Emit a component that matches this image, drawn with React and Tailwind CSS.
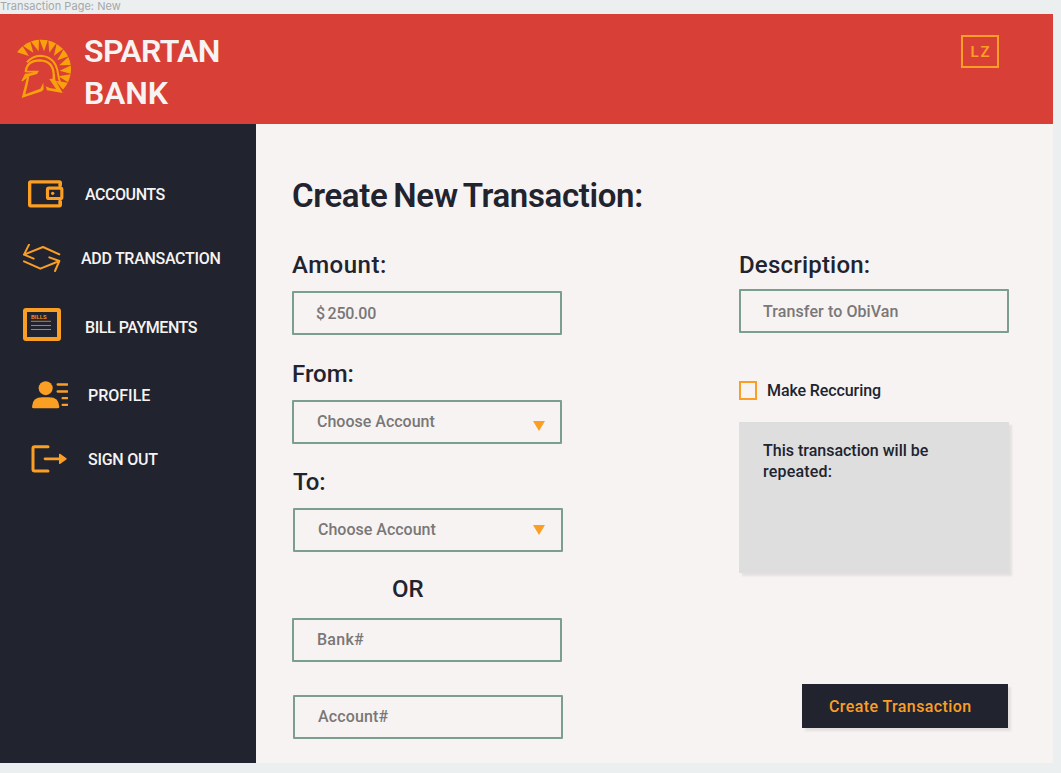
import React from 'react';

const CX = 125;
const CY = 208;
const polar = (r, deg) => {
  const a = (deg * Math.PI) / 180;
  return `${(CX + r * Math.cos(a)).toFixed(1)},${(CY + r * Math.sin(a)).toFixed(1)}`;
};

const WEDGES = Array.from({ length: 11 }, (_, i) => 215 + i * 17.2);

function Helmet() {
  return (
    <svg className="block h-[60px] w-[56px] shrink-0" viewBox="49 117 168 180" fill="none" stroke="#f9a10b">
      {WEDGES.map((a) => (
        <path
          key={a}
          fill="#f9a10b"
          stroke="none"
          d={`M${polar(89, a)}A89 89 0 0 1 ${polar(89, a + 16)}L${polar(55, a + 12)}Z`}
        />
      ))}
      <path strokeWidth="6" d="M82 187Q97 168 122 167Q163 169 173 210Q176 238 187 262" />
      <path strokeWidth="6.500" d="M78 215Q82 181 121 181Q160 183 162 222L162 238" />
      <path fill="#f9a10b" stroke="none" d="M75 212L118 212L112 222L88 229L69 244L65 243L76 221L104 218L76 217Z" />
      <path fill="#f9a10b" stroke="none" d="M82 232L89 228L84 254L77 283L122 266L131 248L132 268L127 274L66 294L77 252Z" />
      <path fill="#f9a10b" stroke="none" d="M166 220L167 240L189 279L142 271L138 259L150 264L169 267L149 237L159 236Z" />
    </svg>
  );
}

function WalletIcon() {
  return (
    <svg className="block h-[28px] w-[36px]" viewBox="54 29 108 84" fill="none" stroke="#fb9f24">
      <rect x="59" y="34.500" width="92" height="72" rx="3" strokeWidth="10" />
      <path fill="#21232f" stroke="none" d="M140 46h16v46h-16z" />
      <path strokeWidth="9" d="M150 40v14M150 84v18" />
      <rect x="112.500" y="53.500" width="43" height="31" rx="4" fill="#21232f" strokeWidth="9.500" />
      <circle cx="128" cy="69" r="5" fill="#fb9f24" stroke="none" />
    </svg>
  );
}

function ArrowsIcon() {
  return (
    <svg
      className="block h-[29px] w-[38px]"
      viewBox="38 222 114 87"
      fill="none"
      stroke="#fb9f24"
      strokeWidth="6"
      strokeLinecap="round"
      strokeLinejoin="round"
    >
      <path d="M147 253L98 231L41 254M56 224L41 254L70 266" />
      <path d="M41 274L90 296L147 273M117 262L147 273L134 303" />
    </svg>
  );
}

function BillsIcon() {
  return (
    <div className="mb-[1px] h-[33px] w-[38px] rounded-[3px] border-4 border-[#fb9f24] pl-[4px] pt-[1px]">
      <div className="h-[7px] whitespace-nowrap text-[6px] font-medium leading-[7px] tracking-[0px] text-[#fb9f24]">
        BILLS
      </div>
      <svg className="block h-[12px] w-[20px]" viewBox="0 0 20 12" stroke="#fb9f24" strokeWidth="1" opacity="0.75">
        <path d="M0 1.300H20M0 5.500H20M0 9.500H20" />
      </svg>
    </div>
  );
}

function ProfileIcon() {
  return (
    <svg className="block h-[28px] w-[37px]" viewBox="62 257 111 84" fill="#fb9f24">
      <circle cx="106" cy="278.500" r="21" />
      <path d="M65 334Q66 306 96 306H116Q146 306 147 334Q147 339 142 339H70Q65 339 65 334Z" />
      <path
        fill="none"
        stroke="#fb9f24"
        strokeWidth="7"
        strokeLinecap="round"
        d="M142 267.500H171M142 288.500H171M157 308.500H171M157 328.500H171"
      />
    </svg>
  );
}

function SignOutIcon() {
  return (
    <svg className="block h-[28px] w-[36px]" viewBox="63 450 108 84" fill="none" stroke="#fb9f24">
      <path
        strokeWidth="9"
        strokeLinecap="round"
        strokeLinejoin="round"
        d="M114 455H74Q69 455 69 460V523Q69 528 74 528H114"
      />
      <path strokeWidth="8" strokeLinecap="round" d="M105 491.500H150" />
      <path fill="#fb9f24" strokeWidth="4" strokeLinejoin="round" d="M149 478L168 491.500L149 505Z" />
    </svg>
  );
}

function NavItem({ icon, label, className, textClass }) {
  return (
    <a className={`flex h-[40px] items-center ${className}`}>
      {icon}
      <span className={`whitespace-nowrap text-[16px] font-medium leading-[20px] text-[#f7f3f2] ${textClass}`}>
        {label}
      </span>
    </a>
  );
}

function Field({ text, className = '', textClass = '', arrow }) {
  return (
    <div
      className={`flex h-[44px] w-[270px] items-center justify-between rounded-[1px] border-2 border-[#7b9e8f] pl-[23px] pr-[15px] ${className}`}
    >
      <span className={`whitespace-nowrap text-[16px] font-medium leading-[20px] text-[#797777] ${textClass}`}>{text}</span>
      {arrow && (
        <svg className={`block h-[10px] w-[12px] ${arrow}`} viewBox="0 0 12 10" fill="#fb9f24">
          <path d="M0 0H12L6 10Z" />
        </svg>
      )}
    </div>
  );
}

function Label({ children, className = '' }) {
  return (
    <div className={`h-[32px] whitespace-nowrap text-[24px] font-medium leading-[32px] text-[#21232f] ${className}`}>
      {children}
    </div>
  );
}

export default function App() {
  return (
    <div className="flex h-[773px] w-[1061px] flex-col overflow-hidden bg-[#ebeff0] font-['Roboto',sans-serif]">
      <div className="h-[14px] whitespace-nowrap font-['Inter',sans-serif] text-[11px] leading-[13px] tracking-[0.03px] text-[#a5a8a9]">
        Transaction Page: New
      </div>

      <header className="flex h-[110px] w-[1053px] shrink-0 items-start justify-between bg-[#d83f36]">
        <div className="flex pl-[16px]">
          <div className="pt-[25px]">
            <Helmet />
          </div>
          <div className="ml-[12px] mt-[16px] text-[32px] font-semibold leading-[42px] text-[#f7f3f2]">
            <div className="tracking-[-0.650px]">SPARTAN</div>
            <div className="tracking-[-0.200px]">BANK</div>
          </div>
        </div>
        <div className="mr-[54px] mt-[21px] flex h-[33px] w-[38px] items-center justify-center border-2 border-[#fb9f24] pl-[2px] pt-[2px] text-[15px] font-semibold tracking-[1.800px] text-[#fb9f24]">
          LZ
        </div>
      </header>

      <div className="flex h-[639px] w-[1053px] shrink-0">
        <nav className="w-[256px] shrink-0 bg-[#21232f] pt-[50px]">
          <NavItem icon={<WalletIcon />} label="ACCOUNTS" className="pl-[28px]" textClass="ml-[21px] mt-[2px] tracking-[-0.450px]" />
          <NavItem icon={<ArrowsIcon />} label="ADD TRANSACTION" className="mt-[24px] pl-[23px]" textClass="ml-[20px] mt-[2px] tracking-[-0.300px]" />
          <NavItem icon={<BillsIcon />} label="BILL PAYMENTS" className="mt-[27px] pl-[23px]" textClass="ml-[24px] mt-[5px] tracking-[-0.450px]" />
          <NavItem icon={<ProfileIcon />} label="PROFILE" className="mt-[30px] pl-[31px]" textClass="ml-[20px] mt-[2px]" />
          <NavItem icon={<SignOutIcon />} label="SIGN OUT" className="mt-[24px] pl-[31px]" textClass="ml-[21px] mt-[2px] tracking-[-0.250px]" />
        </nav>

        <main className="flex-1 bg-[#f7f3f2] pl-[36px] pt-[52px]">
          <h1 className="h-[40px] whitespace-nowrap text-[33px] font-semibold leading-[40px] tracking-[-0.350px] text-[#21232f] [word-spacing:-2px]">
            Create New Transaction:
          </h1>
          <div className="mt-[33px] flex">
            <section className="w-[447px] shrink-0">
              <Label className="tracking-[0.500px]">Amount:</Label>
              <Field text="$ 250.00" className="mt-[10px]" textClass="-ml-[1px] mt-[1px] tracking-[-0.250px] [word-spacing:-1px]" />
              <Label className="mt-[23px]">From:</Label>
              <Field text="Choose Account" className="mt-[10px]" arrow="mt-[8px]" />
              <Label className="ml-[1px] mt-[22px] tracking-[-0.200px]">To:</Label>
              <Field text="Choose Account" className="ml-[1px] mt-[10px]" arrow="mr-[1px]" />
              <Label className="ml-[100px] mt-[21px]">OR</Label>
              <Field text="Bank#" className="mt-[13px]" textClass="tracking-[0.250px]" />
              <Field text="Account#" className="ml-[1px] mt-[33px]" textClass="tracking-[0.150px]" />
            </section>

            <section className="w-[270px] shrink-0">
              <Label className="tracking-[0.200px]">Description:</Label>
              <Field text="Transfer to ObiVan" className="mt-[8px]" textClass="-ml-[1px] mt-[1px] tracking-[0.100px]" />
              <label className="mt-[47px] flex h-[20px] items-center">
                <span className="h-[19px] w-[18px] border-2 border-[#fb9f24]" />
                <span className="ml-[10px] mt-[2px] whitespace-nowrap text-[16px] font-medium leading-[18px] tracking-[-0.100px] text-[#21232f]">
                  Make Reccuring
                </span>
              </label>
              <div className="mt-[22px] h-[151px] bg-[#dedede] pl-[24px] pt-[18px] text-[16px] font-medium leading-[21px] text-[#21232f] shadow-[3px_3px_2px_rgba(0,0,0,0.08)]">
                <div>This transaction will be</div>
                <div className="tracking-[0.200px]">repeated:</div>
              </div>
              <button className="ml-[63px] mt-[111px] block h-[44px] w-[206px] bg-[#21232f] pl-[27px] text-left text-[16px] font-medium leading-[46px] tracking-[0.400px] text-[#fb9f24] shadow-[3px_3px_2px_rgba(0,0,0,0.08)]">
                <span className="whitespace-nowrap">Create Transaction</span>
              </button>
            </section>
          </div>
        </main>
      </div>
    </div>
  );
}
